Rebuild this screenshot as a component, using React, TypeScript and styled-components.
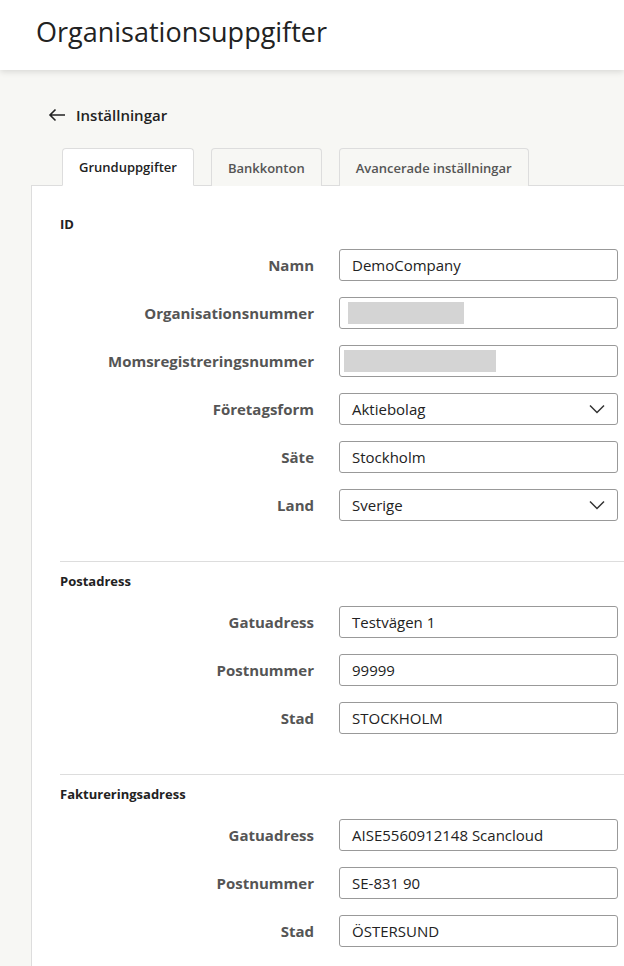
import styled, { createGlobalStyle } from "styled-components";

const Global = createGlobalStyle`
  body { margin: 0; background: #f7f7f4; font-family: "Open Sans", "Noto Sans", sans-serif; color: #222; }
`;

const Header = styled.header`
  height: 70px;
  box-sizing: border-box;
  background: #fff;
  box-shadow: 0 2px 6px rgba(0,0,0,0.12);
  display: flex;
  align-items: center;
  padding: 0 0 8px 36px;
  font-size: 27px;
  color: #222;
`;

const Back = styled.div`
  display: flex;
  align-items: center;
  gap: 10px;
  padding: 34px 0 0 48px;
  height: 22px;
  font-size: 15px;
  font-weight: 600;
`;

const Tabs = styled.div`
  display: flex;
  gap: 17px;
  padding: 22px 0 0 62px;
`;

const Tab = styled.div<{ $active?: boolean }>`
  height: 38px;
  padding: 0 16px;
  display: flex;
  align-items: center;
  font-size: 13px;
  font-weight: 600;
  color: ${(p) => (p.$active ? "#222" : "#555")};
  background: ${(p) => (p.$active ? "#fff" : "#f7f7f4")};
  border: 1px solid #ddd;
  border-bottom: ${(p) => (p.$active ? "1px solid #fff" : "none")};
  border-radius: 4px 4px 0 0;
  margin-bottom: -1px;
  position: relative;
  z-index: 1;
  box-sizing: border-box;
`;

const Panel = styled.div`
  margin-left: 31px;
  background: #fff;
  border: 1px solid #ddd;
  border-right: none;
  border-bottom: none;
  padding: 29px 0 40px 28px;
  min-height: 760px;
`;

const Section = styled.div<{ $divider?: boolean }>`
  border-top: ${(p) => (p.$divider ? "1px solid #ddd" : "none")};
  padding-top: ${(p) => (p.$divider ? "10px" : "0")};
  margin-bottom: 40px;
`;

const SectionTitle = styled.div`
  font-size: 13px;
  font-weight: 700;
  margin-bottom: 16px;
`;

const Row = styled.div`
  display: grid;
  grid-template-columns: 254px 279px;
  column-gap: 25px;
  align-items: center;
  margin-bottom: 16px;
`;

const Label = styled.div`
  text-align: right;
  font-size: 15px;
  font-weight: 700;
  color: #555;
`;

const Field = styled.div`
  height: 32px;
  box-sizing: border-box;
  border: 1px solid #999;
  border-radius: 3px;
  display: flex;
  align-items: center;
  justify-content: space-between;
  padding: 0 12px;
  font-size: 15px;
`;

const Redacted = styled.div<{ $w: number; $x: number }>`
  width: ${(p) => p.$w}px;
  height: 22px;
  background: #d4d4d4;
  margin-left: ${(p) => p.$x}px;
`;

const Chevron = () => (
  <svg width="16" height="10" viewBox="0 0 16 10" fill="none" stroke="#333" strokeWidth="1.5">
    <path d="M1 1.5l7 7 7-7" />
  </svg>
);

type F = { label: string; value?: string; select?: boolean; redact?: [number, number] };

const sections: { title: string; fields: F[] }[] = [
  {
    title: "ID",
    fields: [
      { label: "Namn", value: "DemoCompany" },
      { label: "Organisationsnummer", redact: [116, -4] },
      { label: "Momsregistreringsnummer", redact: [152, -8] },
      { label: "Företagsform", value: "Aktiebolag", select: true },
      { label: "Säte", value: "Stockholm" },
      { label: "Land", value: "Sverige", select: true },
    ],
  },
  {
    title: "Postadress",
    fields: [
      { label: "Gatuadress", value: "Testvägen 1" },
      { label: "Postnummer", value: "99999" },
      { label: "Stad", value: "STOCKHOLM" },
    ],
  },
  {
    title: "Faktureringsadress",
    fields: [
      { label: "Gatuadress", value: "AISE5560912148 Scancloud" },
      { label: "Postnummer", value: "SE-831 90" },
      { label: "Stad", value: "ÖSTERSUND" },
    ],
  },
];

export default function App() {
  return (
    <>
      <Global />
      <Header>Organisationsuppgifter</Header>
      <Back>
        <svg width="18" height="14" viewBox="0 0 18 14" fill="none" stroke="#222" strokeWidth="1.6">
          <path d="M17 7H2M7.5 1.5L2 7l5.5 5.5" />
        </svg>
        Inställningar
      </Back>
      <Tabs>
        <Tab $active>Grunduppgifter</Tab>
        <Tab>Bankkonton</Tab>
        <Tab>Avancerade inställningar</Tab>
      </Tabs>
      <Panel>
        {sections.map((s, i) => (
          <Section key={s.title} $divider={i > 0}>
            <SectionTitle>{s.title}</SectionTitle>
            {s.fields.map((f) => (
              <Row key={f.label}>
                <Label>{f.label}</Label>
                <Field>
                  {f.redact ? <Redacted $w={f.redact[0]} $x={f.redact[1]} /> : <span>{f.value}</span>}
                  {f.select && <Chevron />}
                </Field>
              </Row>
            ))}
          </Section>
        ))}
      </Panel>
    </>
  );
}
